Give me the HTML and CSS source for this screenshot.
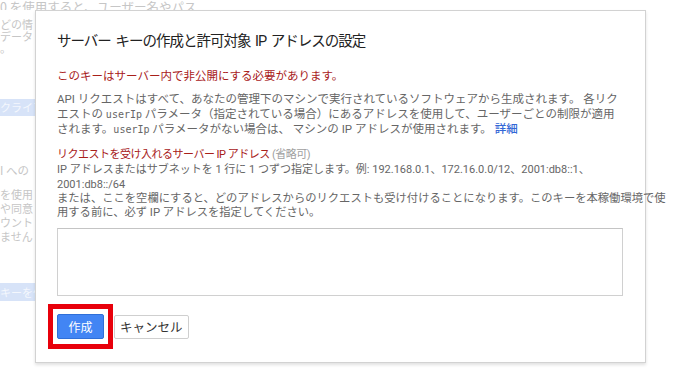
FILE: index.html
```html
<!DOCTYPE html>
<html lang="ja">
<head>
<meta charset="utf-8">
<title>サーバー キーの作成</title>
<link rel="stylesheet" href="styles.css">
</head>
<body>
<div class="page">
  <div class="bg-top">0 を使用すると、ユーザー名やパス</div>
  <div class="bg-para">どの情<br>データ<br>。</div>
  <div class="bg-btn">クライア</div>
  <div class="bg-head">I への</div>
  <div class="bg-para2">を使用<br>や同意<br>ウント<br>ません</div>
  <div class="bg-btn bg-btn2">キーを作</div>
</div>

<div class="dialog">
  <h1 class="title">サーバー キーの作成と許可対象 IP アドレスの設定</h1>
  <p class="warn">このキーはサーバー内で非公開にする必要があります。</p>
  <p class="desc">API リクエストはすべて、あなたの管理下のマシンで実行されているソフトウェアから生成されます。 各リク<br>エストの <code>userIp</code> パラメータ（指定されている場合）にあるアドレスを使用して、ユーザーごとの制限が適用<br>されます。<code>userIp</code> パラメータがない場合は、 マシンの IP アドレスが使用されます。 <a class="more" href="#">詳細</a></p>
  <p class="label">リクエストを受け入れるサーバー IP アドレス <span class="opt">(省略可)</span></p>
  <p class="hint">IP アドレスまたはサブネットを 1 行に 1 つずつ指定します。例: 192.168.0.1、172.16.0.0/12、2001:db8::1、<br>2001:db8::/64</p>
  <p class="hint2">または、ここを空欄にすると、どのアドレスからのリクエストも受け付けることになります。このキーを本稼働環境で使<br>用する前に、必ず IP アドレスを指定してください。</p>
  <textarea class="ips"></textarea>
  <div class="actions">
    <span class="mark"><button class="btn primary">作成</button></span>
    <button class="btn">キャンセル</button>
  </div>
</div>
</body>
</html>
```
FILE: styles.css
```css
html, body {
  margin: 0;
  padding: 0;
  background: #fff;
}
body {
  width: 680px;
  height: 383px;
  overflow: hidden;
  font-family: Roboto, "Noto Sans CJK JP", sans-serif;
}

/* faded background page */
.page {
  font-family: "Noto Sans CJK JP", sans-serif;
  font-size: 11px;
  color: #c6c6c6;
  white-space: nowrap;
}
.bg-top {
  font-size: 12.5px;
  line-height: 12px;
  padding-top: 1px;
  height: 9px;
  overflow: hidden;
}
.bg-para {
  margin-top: 8px;
  line-height: 12px;
}
.bg-btn {
  margin-top: 45px;
  width: 35px;
  height: 17px;
  line-height: 17px;
  overflow: hidden;
  background: #d7e3f8;
  color: #f4f7fd;
}
.bg-head {
  margin-top: 48px;
  line-height: 12px;
  font-size: 11.5px;
}
.bg-para2 {
  margin-top: 11px;
  line-height: 14px;
}
.bg-btn2 {
  margin-top: 40px;
  height: 18px;
  line-height: 18px;
}

/* dialog */
.dialog {
  position: absolute;
  left: 35px;
  top: 10px;
  width: 611px;
  height: 353px;
  box-sizing: border-box;
  background: #fff;
  border: 1px solid #d2d2d2;
  box-shadow: 0 2px 3px rgba(0, 0, 0, 0.12);
  padding: 21px 22px 0 21px;
}
.title {
  margin: 0;
  font-size: 14.5px;
  font-weight: normal;
  line-height: 20px;
  letter-spacing: -1px;
  word-spacing: 2px;
  color: #222;
  white-space: nowrap;
}
.warn {
  margin: 16px 0 0;
  font-size: 11.5px;
  line-height: 16px;
  color: #a8201a;
  white-space: nowrap;
}
.desc {
  margin: 8px 0 0;
  font-size: 11.5px;
  line-height: 15px;
  color: #666;
  white-space: nowrap;
}
code {
  font-family: "DejaVu Sans Mono", monospace;
  font-size: 10px;
  color: #666;
}
.more {
  color: #3367d6;
  text-decoration: none;
  font-weight: 500;
}
.label {
  margin: 11px 0 0;
  font-size: 11px;
  line-height: 14px;
  letter-spacing: -0.5px;
  color: #a8201a;
  white-space: nowrap;
}
.opt {
  color: #a0a0a0;
}
.hint {
  margin: 0;
  font-size: 11px;
  line-height: 15px;
  color: #666;
  white-space: nowrap;
}
.hint2 {
  margin: 0;
  font-size: 11.3px;
  line-height: 14px;
  color: #666;
  white-space: nowrap;
}
.ips {
  display: block;
  margin: 8px 0 0;
  width: 566px;
  height: 68px;
  box-sizing: border-box;
  border: 1px solid #d0d0d0;
  border-top-color: #c4c4c4;
  resize: none;
  outline: none;
  padding: 4px;
}
.actions {
  display: flex;
  align-items: center;
  margin-top: 8px;
  margin-left: -9px;
  gap: 1px;
}
.mark {
  display: inline-flex;
  border: 5px solid #e8000b;
  padding: 5px 4px;
}
.btn {
  height: 24px;
  box-sizing: border-box;
  padding: 0 5px;
  border: 1px solid #cfcfcf;
  border-radius: 2px;
  background: #fff;
  color: #333;
  font-family: "Noto Sans CJK JP", sans-serif;
  font-size: 12.5px;
  line-height: 22px;
  cursor: pointer;
}
.btn.primary {
  width: 47px;
  height: 25px;
  padding: 0;
  background: #4285f4;
  border-color: #2f6fd8;
  color: #fff;
  font-size: 12px;
}
```
